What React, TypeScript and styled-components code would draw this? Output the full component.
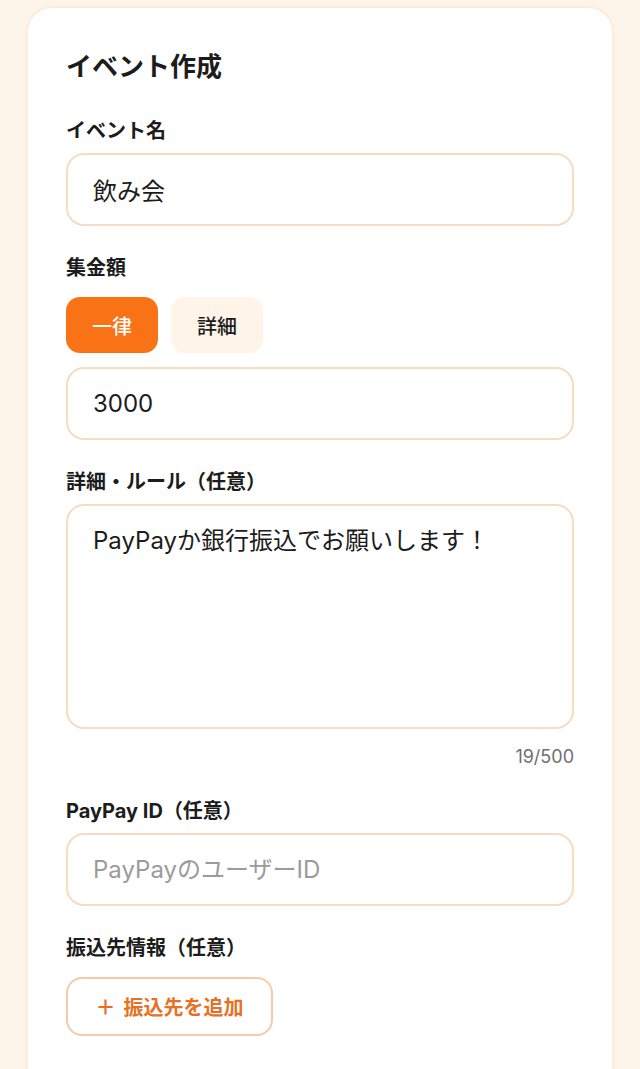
import React, { useState } from 'react'
import styled, { createGlobalStyle } from 'styled-components'

const colors = {
  page: '#fef5ea',
  cardBorder: '#fcecd9',
  inputBorder: '#f8dcbf',
  orange: '#f97316',
  orangeText: '#e8701f',
  orangeSoft: '#fff4e8',
  addBorder: '#f6caa4',
  text: '#1c1c1c',
  muted: '#6f6f6f',
  placeholder: '#9b9b9b'
}

const GlobalStyle = createGlobalStyle`
  html, body {
    margin: 0;
    padding: 0;
    background: ${colors.page};
  }
  body {
    font-family: "Inter", "Noto Sans CJK JP", sans-serif;
    color: ${colors.text};
  }
  * { box-sizing: border-box; }
`

const Page = styled.div`
  padding: 6px 26px 0;
  min-height: 1069px;
`

const Card = styled.section`
  background: #ffffff;
  border: 2px solid ${colors.cardBorder};
  border-radius: 26px;
  padding: 42px 38px 40px;
  display: flex;
  flex-direction: column;
`

const Title = styled.h1`
  margin: 0 0 33px;
  font-size: 26px;
  line-height: 34px;
  font-weight: 700;
`

const Fields = styled.div`
  display: flex;
  flex-direction: column;
  gap: 28px;
`

const Field = styled.div`
  display: flex;
  flex-direction: column;
`

const Label = styled.label`
  font-size: 20px;
  line-height: 28px;
  font-weight: 700;
  margin-bottom: 8px;
`

const inputBase = `
  width: 100%;
  border: 2px solid ${colors.inputBorder};
  border-radius: 18px;
  background: #ffffff;
  font-family: "Inter", "Noto Sans CJK JP", sans-serif;
  font-size: 24px;
  color: ${colors.text};
  outline: none;
  &::placeholder { color: ${colors.placeholder}; }
`

const TextInput = styled.input`
  ${inputBase}
  height: 73px;
  padding: 0 25px;
`

const TextArea = styled.textarea`
  ${inputBase}
  height: 225px;
  padding: 17px 25px;
  line-height: 36px;
  resize: none;
`

const Counter = styled.div`
  margin-top: 16px;
  text-align: right;
  font-size: 18px;
  line-height: 24px;
  color: ${colors.muted};
`

const Toggle = styled.div`
  display: flex;
  gap: 13px;
  margin: 7px 0 14px;
`

const ToggleButton = styled.button<{ $active: boolean }>`
  width: 92px;
  height: 56px;
  border: none;
  border-radius: 14px;
  font-family: "Inter", "Noto Sans CJK JP", sans-serif;
  font-size: 20px;
  font-weight: 500;
  cursor: pointer;
  background: ${p => (p.$active ? colors.orange : colors.orangeSoft)};
  color: ${p => (p.$active ? '#ffffff' : colors.text)};
`

const AddButton = styled.button`
  margin: 7px 0 3px;
  align-self: flex-start;
  width: 207px;
  height: 59px;
  border: 2px solid ${colors.addBorder};
  border-radius: 16px;
  background: #ffffff;
  color: ${colors.orangeText};
  font-family: "Inter", "Noto Sans CJK JP", sans-serif;
  font-size: 20px;
  font-weight: 700;
  display: flex;
  align-items: center;
  justify-content: center;
  gap: 8px;
  cursor: pointer;
`

export default function App() {
  const [mode, setMode] = useState<'flat' | 'detail'>('flat')
  const [rules, setRules] = useState('PayPayか銀行振込でお願いします！')

  return (
    <>
      <GlobalStyle />
      <Page>
        <Card>
          <Title>イベント作成</Title>
          <Fields>
            <Field>
              <Label>イベント名</Label>
              <TextInput defaultValue="飲み会" />
            </Field>
            <Field>
              <Label>集金額</Label>
              <Toggle>
                <ToggleButton $active={mode === 'flat'} onClick={() => setMode('flat')}>一律</ToggleButton>
                <ToggleButton $active={mode === 'detail'} onClick={() => setMode('detail')}>詳細</ToggleButton>
              </Toggle>
              <TextInput defaultValue="3000" />
            </Field>
            <Field>
              <Label>詳細・ルール（任意）</Label>
              <TextArea value={rules} onChange={e => setRules(e.target.value)} />
              <Counter>{rules.length}/500</Counter>
            </Field>
            <Field>
              <Label>PayPay ID（任意）</Label>
              <TextInput placeholder="PayPayのユーザーID" />
            </Field>
            <Field>
              <Label>振込先情報（任意）</Label>
              <AddButton>
                <span>＋</span>
                <span>振込先を追加</span>
              </AddButton>
            </Field>
            <Field>
              <Label>期限</Label>
              <TextInput />
            </Field>
          </Fields>
        </Card>
      </Page>
    </>
  )
}
